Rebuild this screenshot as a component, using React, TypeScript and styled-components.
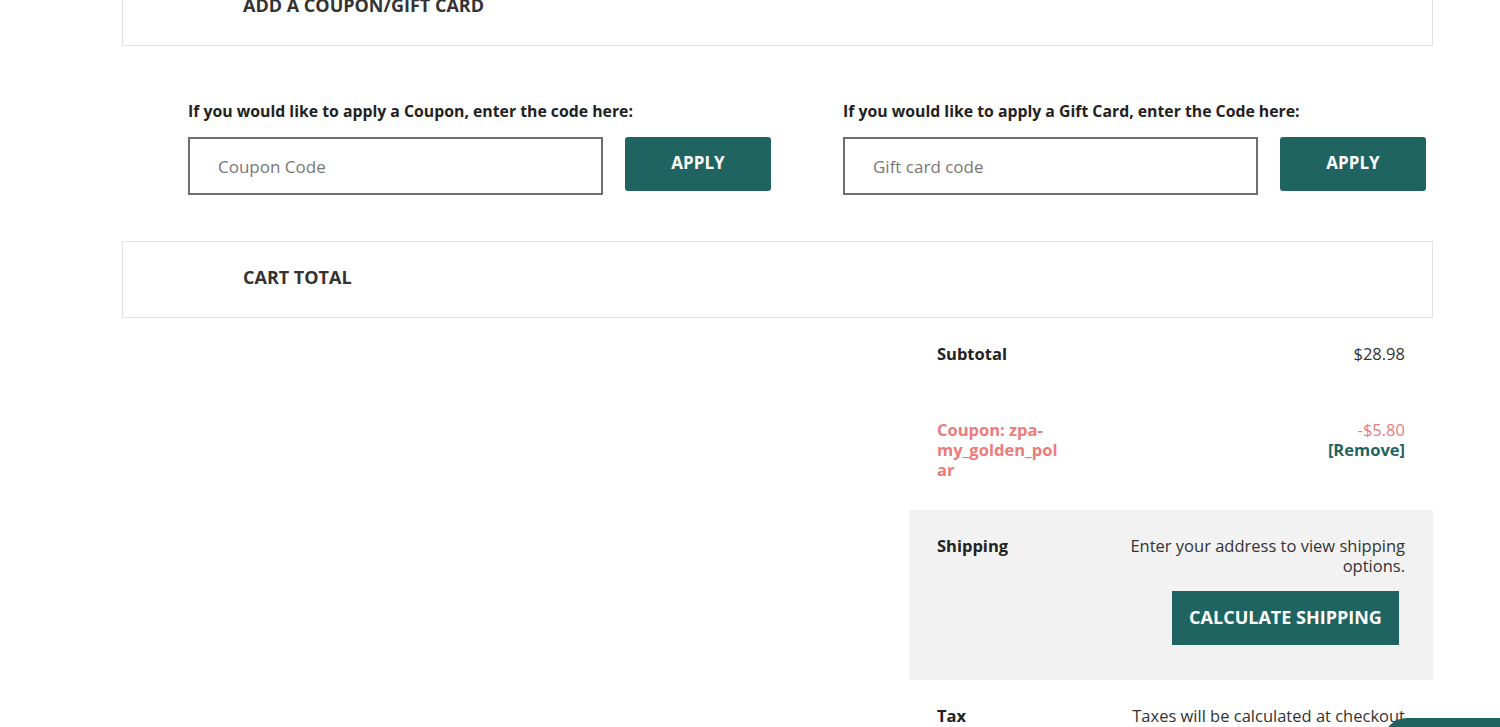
import React from 'react';
import styled, { createGlobalStyle } from 'styled-components';

const GlobalStyle = createGlobalStyle`
  html, body {
    margin: 0;
    padding: 0;
    background: #fff;
    overflow: hidden;
  }
  body {
    font-family: 'Open Sans', Lato, sans-serif;
    color: #222;
  }
  * { box-sizing: border-box; }
`;

const Page = styled.div`
  width: 1311px;
  margin: -31px 0 0 122px;
`;

const SectionBox = styled.div`
  height: 77px;
  border: 1px solid #e2e2e2;
  display: flex;
  align-items: center;
  padding: 0 0 5px 120px;
  font-size: 18px;
  font-weight: 700;
  color: #333;
  text-transform: uppercase;
`;

const CouponArea = styled.div`
  display: flex;
  gap: 72px;
  padding: 55px 0 46px 66px;
`;

const CouponGroup = styled.div`
  width: 583px;
  display: flex;
  flex-direction: column;
  gap: 16px;
`;

const FieldLabel = styled.label`
  font-size: 15.8px;
  font-weight: 700;
  color: #222;
  line-height: 20px;
  white-space: nowrap;
`;

const FieldRow = styled.div`
  display: flex;
  align-items: flex-start;
  gap: 22px;
`;

const CodeInput = styled.input`
  width: 415px;
  height: 58px;
  border: 2px solid #6e6e6e;
  padding: 0 28px;
  font-family: inherit;
  font-size: 17px;
  color: #333;
  outline: none;
  &::placeholder {
    color: #777;
  }
`;

const ApplyButton = styled.button`
  width: 146px;
  height: 54px;
  border: none;
  border-radius: 3px;
  background: #1f6461;
  color: #fff;
  font-family: inherit;
  font-size: 17px;
  font-weight: 700;
  padding-bottom: 4px;
`;

const TotalsTable = styled.div`
  width: 524px;
  margin-left: 787px;
`;

const TotalsRow = styled.div<{ $shaded?: boolean }>`
  display: flex;
  justify-content: space-between;
  align-items: flex-start;
  padding: 26px 28px 30px;
  background: ${(p) => (p.$shaded ? '#f2f2f2' : 'transparent')};
  font-size: 16.5px;
  line-height: 20px;
`;

const RowLabel = styled.div<{ $tone?: 'coupon' }>`
  width: 124px;
  flex-shrink: 0;
  font-weight: 700;
  color: ${(p) => (p.$tone === 'coupon' ? '#ec7b7b' : '#222')};
  overflow-wrap: anywhere;
`;

const RowValue = styled.div`
  text-align: right;
  color: #333;
  display: flex;
  flex-direction: column;
  align-items: flex-end;
`;

const Discount = styled.span`
  color: #ec7b7b;
`;

const RemoveLink = styled.a`
  color: #1f6461;
  font-weight: 700;
  text-decoration: none;
`;

const ShippingNote = styled.div`
  width: 290px;
  text-align: right;
`;

const ShippingButton = styled.button`
  margin: 15px 6px 5px 0;
  width: 227px;
  height: 54px;
  border: none;
  background: #1f6461;
  color: #fff;
  font-family: inherit;
  font-size: 18px;
  font-weight: 700;
  padding-bottom: 4px;
`;

const ChatBubble = styled.div`
  position: fixed;
  left: 1383px;
  top: 718px;
  width: 140px;
  height: 50px;
  border-radius: 24px 0 0 0;
  background: #1f6461;
`;

export default function App() {
  return (
    <>
      <GlobalStyle />
      <Page>
        <SectionBox>Add a coupon/gift card</SectionBox>
        <CouponArea>
          <CouponGroup>
            <FieldLabel>If you would like to apply a Coupon, enter the code here:</FieldLabel>
            <FieldRow>
              <CodeInput placeholder="Coupon Code" />
              <ApplyButton>APPLY</ApplyButton>
            </FieldRow>
          </CouponGroup>
          <CouponGroup>
            <FieldLabel>If you would like to apply a Gift Card, enter the Code here:</FieldLabel>
            <FieldRow>
              <CodeInput placeholder="Gift card code" />
              <ApplyButton>APPLY</ApplyButton>
            </FieldRow>
          </CouponGroup>
        </CouponArea>
        <SectionBox>Cart total</SectionBox>
        <TotalsTable>
          <TotalsRow>
            <RowLabel>Subtotal</RowLabel>
            <RowValue>$28.98</RowValue>
          </TotalsRow>
          <TotalsRow>
            <RowLabel $tone="coupon">Coupon: zpa-my_golden_polar</RowLabel>
            <RowValue>
              <Discount>-$5.80</Discount>
              <RemoveLink href="#">[Remove]</RemoveLink>
            </RowValue>
          </TotalsRow>
          <TotalsRow $shaded>
            <RowLabel>Shipping</RowLabel>
            <RowValue>
              <ShippingNote>Enter your address to view shipping options.</ShippingNote>
              <ShippingButton>CALCULATE SHIPPING</ShippingButton>
            </RowValue>
          </TotalsRow>
          <TotalsRow>
            <RowLabel>Tax</RowLabel>
            <RowValue>Taxes will be calculated at checkout</RowValue>
          </TotalsRow>
        </TotalsTable>
      </Page>
      <ChatBubble />
    </>
  );
}
